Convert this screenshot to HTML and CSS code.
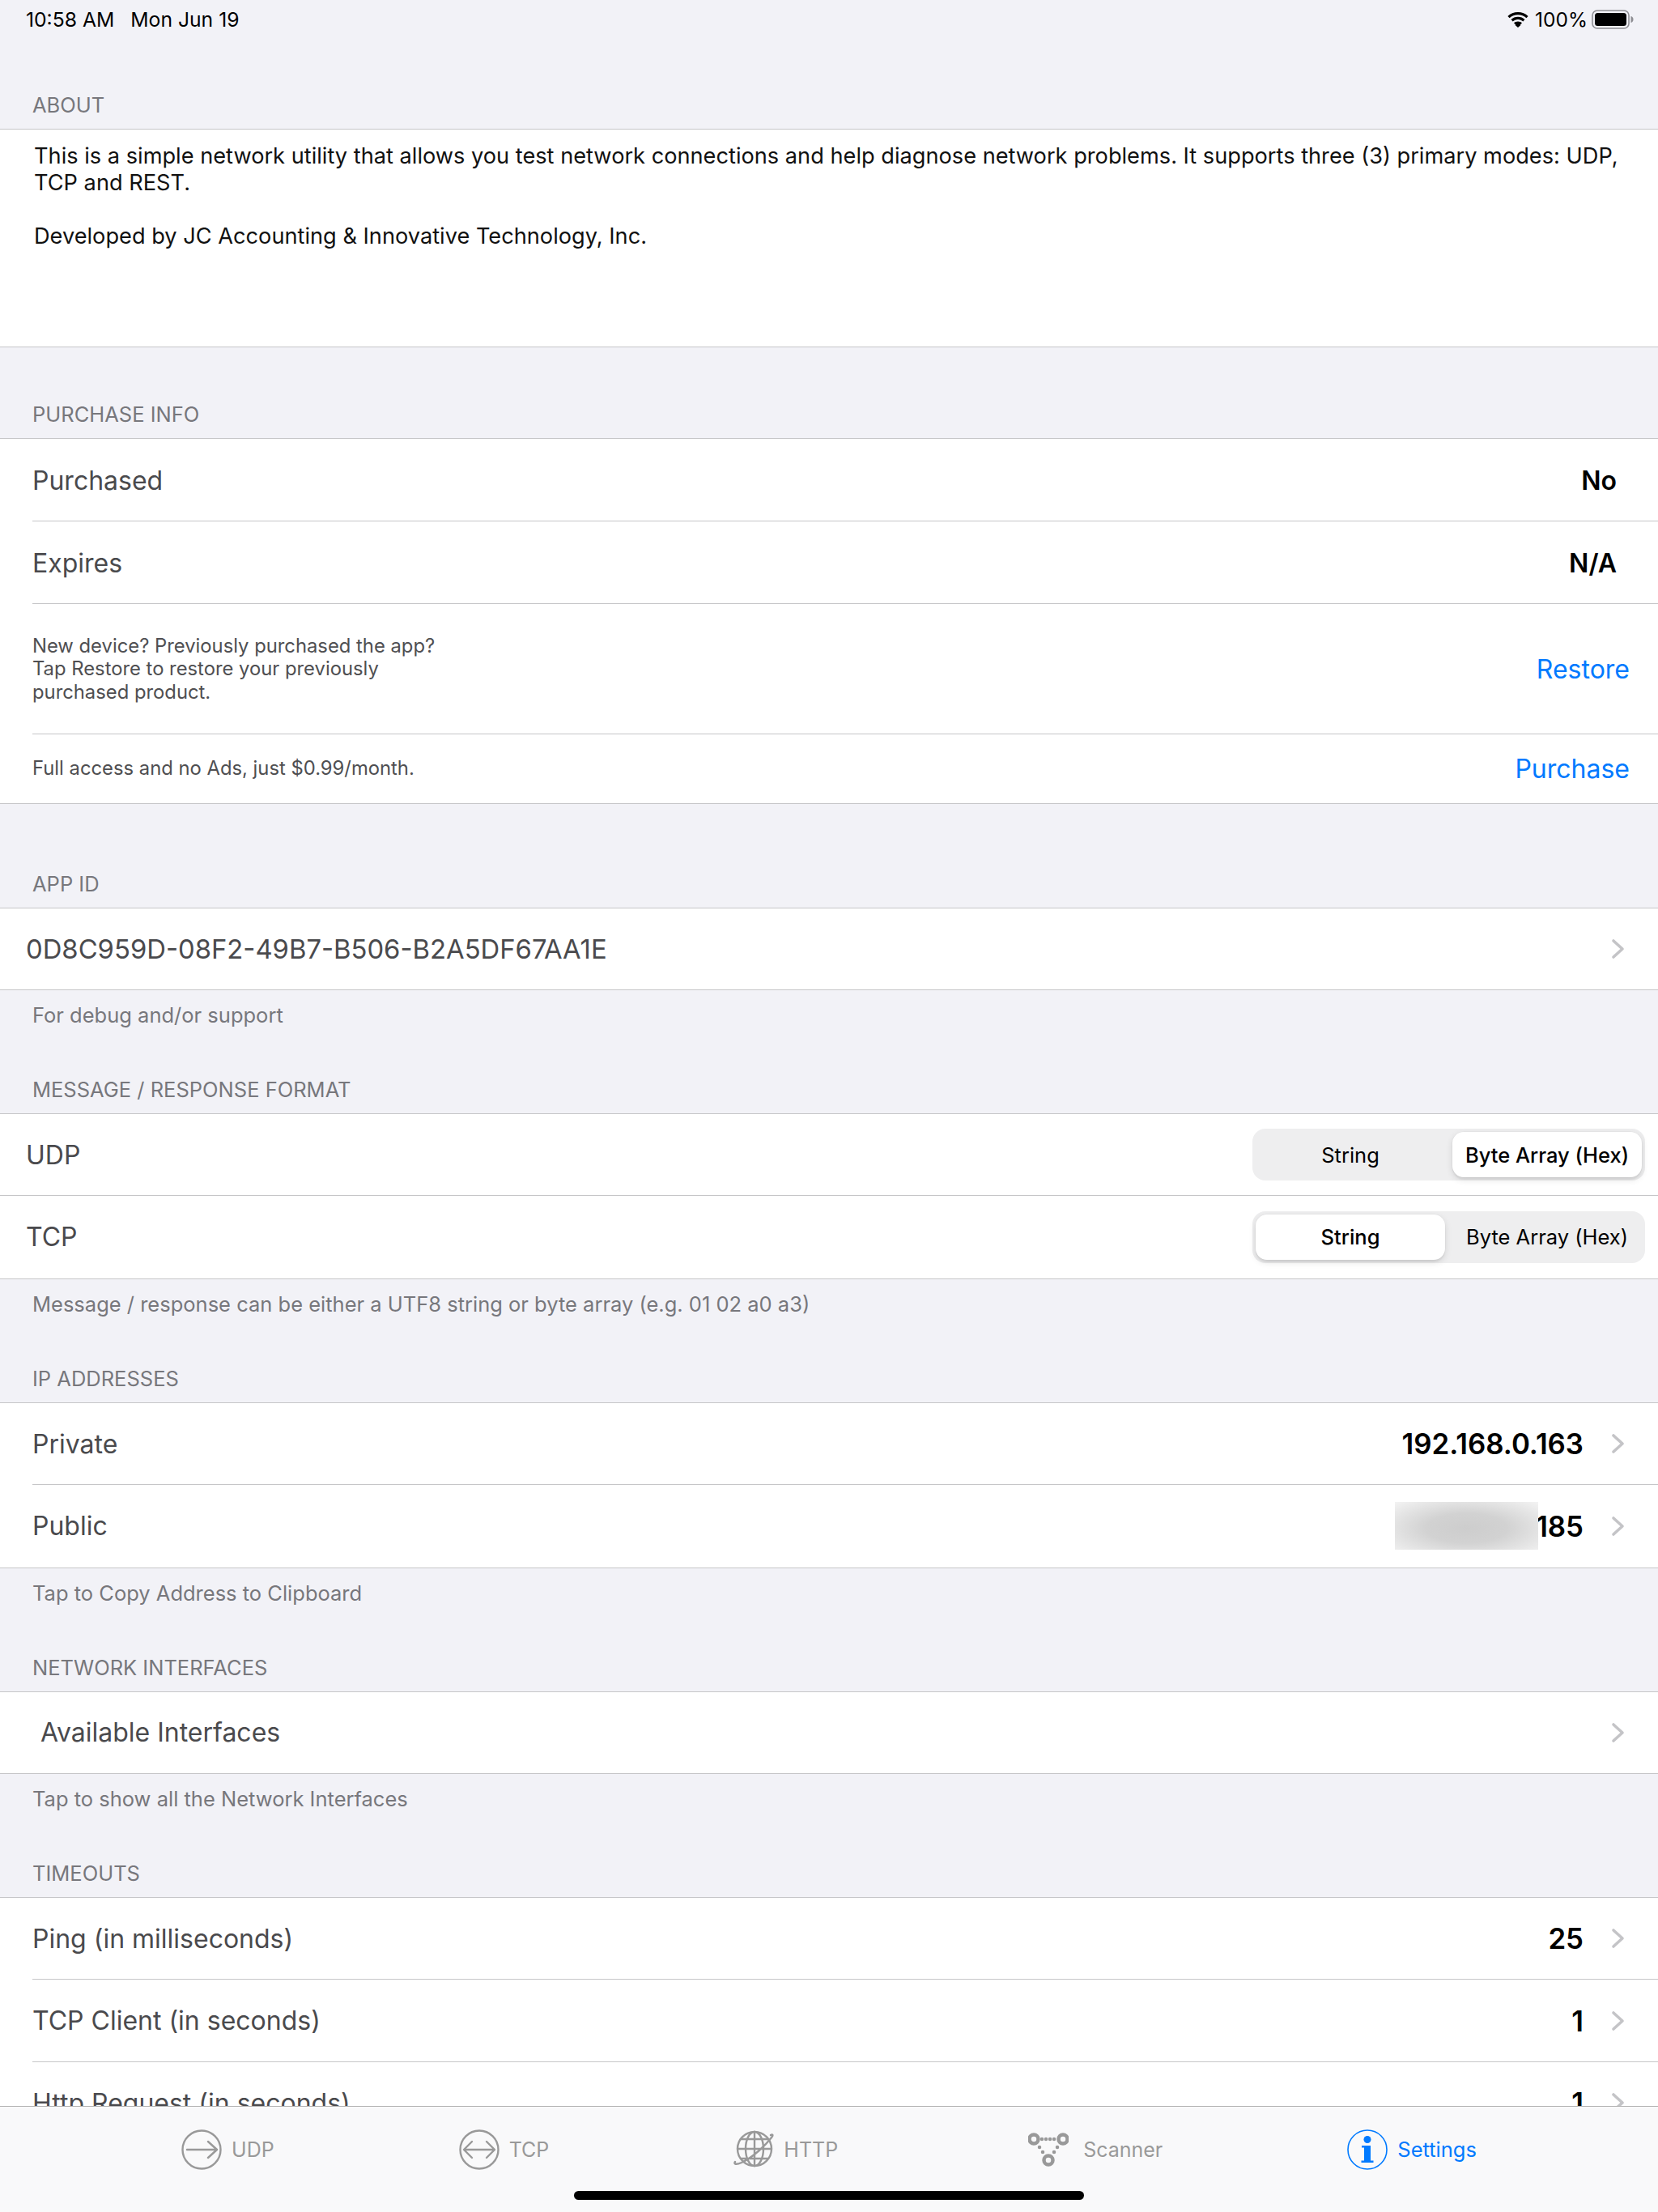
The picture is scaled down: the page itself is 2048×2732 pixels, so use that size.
FILE: index.html
```html
<!DOCTYPE html>
<html lang="en">
<head>
<meta charset="utf-8">
<title>Settings</title>
<link rel="stylesheet" href="styles.css">
</head>
<body>
<div class="screen">
  <div class="status">
    <div class="status-left"><span>10:58 AM</span><span>Mon Jun 19</span></div>
    <div class="status-right">
      <svg class="wifi" width="28" height="19" viewBox="0 0 28 19"><path d="M14 3.200c4 0 7.600 1.500 10.400 4l2.200-2.300C23.300 1.800 18.900 0 14 0S4.700 1.800 1.400 4.900l2.200 2.300c2.800-2.500 6.400-4 10.400-4zM14 9c2.400 0 4.600.9 6.300 2.400l2.200-2.300C20.200 7 17.300 5.800 14 5.800S7.800 7 5.500 9.100l2.200 2.300C9.400 9.900 11.600 9 14 9zM14 14.600c-1.300 0-2.500.5-3.400 1.300L14 19l3.400-3.100c-.9-.8-2.100-1.300-3.400-1.300zM14 11.500c-2 0-3.700.7-5 1.900l2.200 2.200c.8-.6 1.800-1 2.800-1s2 .4 2.800 1l2.200-2.200c-1.300-1.200-3-1.900-5-1.900z"/></svg>
      <span>100%</span>
      <svg class="battery" width="52" height="24" viewBox="0 0 52 24"><rect x="1" y="1" width="45" height="22" rx="6" fill="none" stroke="#8e8e93" stroke-width="1.600"/><rect x="4" y="4" width="39" height="16" rx="3.500"/><path d="M48.500 8c2 .5 3 2 3 4s-1 3.500-3 4z" fill="#8e8e93"/></svg>
    </div>
  </div>

  <div class="scroller">
    <section class="section s-about">
      <h2 class="head">ABOUT</h2>
      <div class="card about">
        <p>This is a simple network utility that allows you test network connections and help diagnose network problems. It supports three (3) primary modes: UDP, TCP and REST.</p>
        <p class="about-gap">Developed by JC Accounting &amp; Innovative Technology, Inc.</p>
      </div>
    </section>

    <section class="section s-purchase">
      <h2 class="head">PURCHASE INFO</h2>
      <div class="card">
        <div class="row"><span class="title">Purchased</span><span class="value flush">No</span></div>
        <div class="row"><span class="title">Expires</span><span class="value flush">N/A</span></div>
        <div class="row row-tall"><span class="note">New device? Previously purchased the app?<br>Tap Restore to restore your previously<br>purchased product.</span><span class="link">Restore</span></div>
        <div class="row row-buy"><span class="note">Full access and no Ads, just $0.99/month.</span><span class="link">Purchase</span></div>
      </div>
    </section>

    <section class="section s-appid">
      <h2 class="head">APP ID</h2>
      <div class="card">
        <div class="row tight"><span class="title code">0D8C959D-08F2-49B7-B506-B2A5DF67AA1E</span><svg class="chev" width="18" height="26" viewBox="0 0 18 26"><path d="M3 3l11 10L3 23"/></svg></div>
      </div>
      <p class="foot">For debug and/or support</p>
    </section>

    <section class="section">
      <h2 class="head">MESSAGE / RESPONSE FORMAT</h2>
      <div class="card">
        <div class="row tight seg-row"><span class="title">UDP</span>
          <div class="seg"><span class="opt">String</span><span class="opt on">Byte Array (Hex)</span></div></div>
        <div class="row tight seg-row"><span class="title">TCP</span>
          <div class="seg"><span class="opt on">String</span><span class="opt">Byte Array (Hex)</span></div></div>
      </div>
      <p class="foot">Message / response can be either a UTF8 string or byte array (e.g. 01 02 a0 a3)</p>
    </section>

    <section class="section">
      <h2 class="head">IP ADDRESSES</h2>
      <div class="card">
        <div class="row"><span class="title">Private</span><span class="value">192.168.0.163</span><svg class="chev" width="18" height="26" viewBox="0 0 18 26"><path d="M3 3l11 10L3 23"/></svg></div>
        <div class="row"><span class="title">Public</span><span class="value masked">185<i class="blur"></i></span><svg class="chev" width="18" height="26" viewBox="0 0 18 26"><path d="M3 3l11 10L3 23"/></svg></div>
      </div>
      <p class="foot">Tap to Copy Address to Clipboard</p>
    </section>

    <section class="section">
      <h2 class="head">NETWORK INTERFACES</h2>
      <div class="card">
        <div class="row wide"><span class="title">Available Interfaces</span><svg class="chev" width="18" height="26" viewBox="0 0 18 26"><path d="M3 3l11 10L3 23"/></svg></div>
      </div>
      <p class="foot">Tap to show all the Network Interfaces</p>
    </section>

    <section class="section">
      <h2 class="head">TIMEOUTS</h2>
      <div class="card">
        <div class="row"><span class="title">Ping (in milliseconds)</span><span class="value">25</span><svg class="chev" width="18" height="26" viewBox="0 0 18 26"><path d="M3 3l11 10L3 23"/></svg></div>
        <div class="row"><span class="title">TCP Client (in seconds)</span><span class="value">1</span><svg class="chev" width="18" height="26" viewBox="0 0 18 26"><path d="M3 3l11 10L3 23"/></svg></div>
        <div class="row"><span class="title">Http Request (in seconds)</span><span class="value">1</span><svg class="chev" width="18" height="26" viewBox="0 0 18 26"><path d="M3 3l11 10L3 23"/></svg></div>
      </div>
    </section>
  </div>

  <nav class="tabbar">
    <div class="tab">
      <svg width="50" height="50" viewBox="0 0 50 50" class="ico"><circle cx="25" cy="25" r="23.500"/><path d="M7 25h37M33 15l11 10-11 10"/></svg>
      <span>UDP</span>
    </div>
    <div class="tab">
      <svg width="50" height="50" viewBox="0 0 50 50" class="ico"><circle cx="25" cy="25" r="23.500"/><path d="M7 25h36M16 15L6 25l10 10M34 15l10 10-10 10"/></svg>
      <span>TCP</span>
    </div>
    <div class="tab tab-http">
      <svg width="50" height="50" viewBox="0 0 50 50" class="ico"><circle cx="26" cy="24" r="21"/><ellipse cx="26" cy="24" rx="11" ry="21"/><path d="M5 24h42M9 12h34M9 36h34M26 3v42M46 7c3-2 3 1 1 3-7 9-22 24-37 31-7 3-10 2-8-1"/></svg>
      <span>HTTP</span>
    </div>
    <div class="tab tab-scan">
      <svg width="50" height="42" viewBox="0 0 50 42" class="ico ico-net"><circle cx="7" cy="8" r="5.500"/><circle cx="43" cy="8" r="5.500"/><circle cx="25" cy="34" r="5.500"/><path class="dots" d="M17 8h.01M22 8h.01M27 8h.01M32 8h.01M14 18h.01M18 24h.01M36 18h.01M32 24h.01"/></svg>
      <span>Scanner</span>
    </div>
    <div class="tab active">
      <svg width="50" height="50" viewBox="0 0 50 50" class="ico-info"><circle cx="25" cy="25" r="24" fill="none" stroke="#007aff" stroke-width="1.600"/><circle cx="25" cy="12.500" r="4.500" fill="#007aff"/><path fill="#007aff" d="M18 20h11v18.500h3.500V41h-15v-2.500H21V22.500h-3z"/></svg>
      <span>Settings</span>
    </div>
  </nav>
  <div class="home"></div>
</div>
</body>
</html>
```
FILE: styles.css
```css
* { box-sizing: border-box; }
html, body { margin: 0; padding: 0; }
body { font-family: Inter, "Noto Sans", sans-serif; background: #f2f2f7; }
.screen { position: relative; width: 2048px; height: 2732px; display: flex; flex-direction: column; overflow: hidden; background: #f2f2f7; }

.status { flex: none; height: 48px; padding: 0 30px 0 32px; display: flex; justify-content: space-between; align-items: center; font-size: 24.700px; color: #000; }
.status-left { display: flex; gap: 20px; }
.status-right { display: flex; align-items: center; gap: 7px; }
.status-right span { font-size: 24.500px; }
.battery { margin-left: -2px; }

.scroller { flex: 1; min-height: 0; overflow: hidden; }
.section { margin-top: 44px; }
.s-about { margin-top: 51px; }
.s-purchase { margin-top: 52px; }
.s-appid { margin-top: 68px; }

.head { margin: 0; height: 60px; padding: 16px 0 0 40px; font-size: 25.500px; line-height: 30px; font-weight: 400; color: #77777c; }
.card { background: #fff; border-top: 1px solid #c6c6c8; border-bottom: 1px solid #c6c6c8; }
.about { height: 270px; padding: 16px 40px 0 42px; font-size: 27.200px; line-height: 33px; color: #111; }
.about p { margin: 0; }
.about .about-gap { margin-top: 33px; }

.row { position: relative; display: flex; align-items: center; height: 101.500px; padding: 0 40px 0 40px; }
.row:only-child { height: 100px; }
.row + .row::before { content: ""; position: absolute; left: 40px; right: 0; top: -1px; height: 1px; background: #c6c6c8; }
.s-purchase .row { height: 102px; }
.s-purchase .row-tall { height: 160.500px; padding-right: 35px; }
.s-purchase .row-buy { height: 85px; padding-right: 35px; }
.tight { padding-left: 32px; }
.seg-row { padding-right: 16px; }
.tight + .tight::before { left: 0; }
.wide { padding-left: 50px; }

.title { flex: 1; font-size: 32px; color: #4a4a4d; }
.code { font-size: 32.800px; }
.note { flex: 1; font-size: 23.800px; line-height: 28.500px; color: #4f4f52; }
.value { position: relative; font-size: 34.800px; font-weight: 600; color: #000; margin-right: 34px; }
.value.flush { font-size: 32px; margin-right: 11px; }
.link { font-size: 32px; color: #007aff; }
.chev { flex: none; fill: none; stroke: #c4c4c7; stroke-width: 3.600; stroke-linecap: round; stroke-linejoin: round; }

.blur { position: absolute; right: 56px; top: -9px; width: 177px; height: 59px; background: radial-gradient(ellipse at 50% 55%, #cdcdcd 0%, #d2d2d2 40%, #f3f3f3 100%); }

.seg { flex: none; display: grid; grid-template-columns: 234px 234px; gap: 9px; width: 485px; height: 64px; padding: 4px; border-radius: 16px; background: #eeeeef; }
.opt { display: flex; align-items: center; justify-content: center; border-radius: 14px; font-size: 25.500px; color: #000; }
.opt.on { background: #fff; font-weight: 500; box-shadow: 0 3px 8px rgba(0,0,0,.12), 0 3px 1px rgba(0,0,0,.04), 0 0 0 .5px rgba(0,0,0,.04); }

.foot { margin: 0; height: 48px; padding: 16px 0 0 40px; font-size: 25.500px; line-height: 30px; color: #77777c; }

.tabbar { flex: none; height: 131px; padding-bottom: 25px; display: flex; justify-content: center; align-items: center; gap: 228px; background: #f9f9fa; border-top: 1px solid #b2b2b2; }
.tab { display: flex; align-items: center; gap: 12px; font-size: 25px; color: #999; }
.tab-http { margin-right: 7px; }
.tab-scan { gap: 18px; }
.tab.active { color: #007aff; gap: 12px; font-size: 25.500px; }
.ico { fill: none; stroke: #999; stroke-width: 2.400; stroke-linecap: round; stroke-linejoin: round; }
.ico-net { stroke-width: 4.500; }
.home { position: absolute; left: 709px; bottom: 15px; width: 630px; height: 11px; border-radius: 6px; background: #000; }
```
